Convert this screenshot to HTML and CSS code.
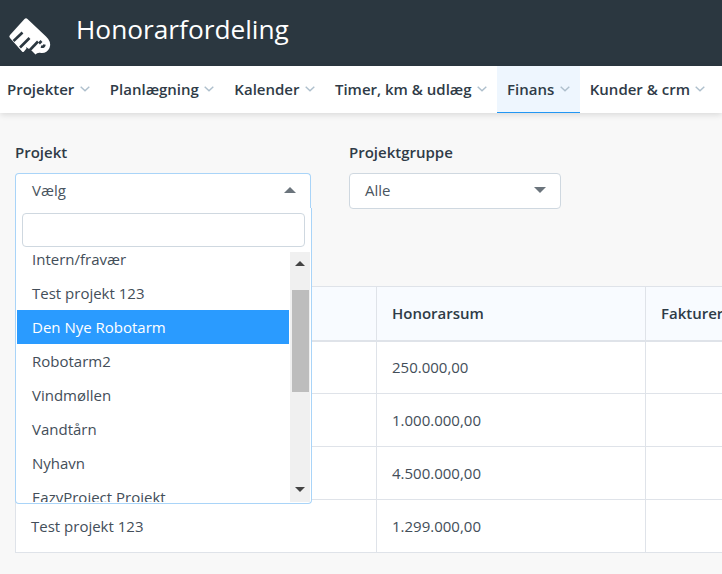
FILE: index.html
```html
<!DOCTYPE html>
<html lang="da">
<head>
<meta charset="utf-8">
<title>Honorarfordeling</title>
<link rel="stylesheet" href="styles.css">
</head>
<body>
<header class="topbar">
  <svg class="logo" viewBox="0 0 56 50" width="56" height="50" aria-label="Logo">
    <path class="logo-body" d="M24.500 11Q26 9.500 27.500 11L46 28.500Q52 34 49.500 40Q46.500 46 40 44.800Q37 44.500 35.500 46.500L32 43 26 39 26.500 40.500 24 43.500Q23 44.500 22 43.500L10 30Q8.500 28.500 10 27Z"/>
    <g class="logo-slits">
      <path d="M13.500 33 22.500 24.500"/>
      <path d="M20 39.500 29.500 30"/>
      <path d="M28 44 38 33.500"/>
      <path d="M39 35.500 41.500 33"/>
      <path d="M41 38.500Q44 39.500 44.500 36.500"/>
    </g>
  </svg>
  <h1 class="title">Honorarfordeling</h1>
</header>
<nav class="menu">
  <a class="menu-item">Projekter<svg class="chev" viewBox="0 0 10 6"><path d="M.7.7 5 4.800 9.300.7"/></svg></a>
  <a class="menu-item">Planlægning<svg class="chev" viewBox="0 0 10 6"><path d="M.7.7 5 4.800 9.300.7"/></svg></a>
  <a class="menu-item">Kalender<svg class="chev" viewBox="0 0 10 6"><path d="M.7.7 5 4.800 9.300.7"/></svg></a>
  <a class="menu-item">Timer, km &amp; udlæg<svg class="chev" viewBox="0 0 10 6"><path d="M.7.7 5 4.800 9.300.7"/></svg></a>
  <a class="menu-item active">Finans<svg class="chev" viewBox="0 0 10 6"><path d="M.7.7 5 4.800 9.300.7"/></svg></a>
  <a class="menu-item">Kunder &amp; crm<svg class="chev" viewBox="0 0 10 6"><path d="M.7.7 5 4.800 9.300.7"/></svg></a>
</nav>
<main class="content">
  <section class="filters">
    <div class="field field-project">
      <label class="field-label">Projekt</label>
      <div class="select open"><span>Vælg</span><i class="caret up"></i></div>
      <div class="dropdown">
        <input class="search" type="text" aria-label="Søg">
        <div class="listwrap">
          <ul class="options">
            <li>Intern/fravær</li>
            <li>Test projekt 123</li>
            <li class="selected">Den Nye Robotarm</li>
            <li>Robotarm2</li>
            <li>Vindmøllen</li>
            <li>Vandtårn</li>
            <li>Nyhavn</li>
            <li>EazyProject Projekt</li>
          </ul>
          <div class="scrollbar">
            <i class="caret up dark"></i>
            <div class="thumb"></div>
            <i class="caret down dark"></i>
          </div>
        </div>
      </div>
    </div>
    <div class="field field-group">
      <label class="field-label">Projektgruppe</label>
      <div class="select"><span>Alle</span><i class="caret down"></i></div>
    </div>
  </section>
  <table class="grid">
    <thead>
      <tr><th></th><th>Honorarsum</th><th>Faktureret</th></tr>
    </thead>
    <tbody>
      <tr><td></td><td>250.000,00</td><td></td></tr>
      <tr><td></td><td>1.000.000,00</td><td></td></tr>
      <tr><td></td><td>4.500.000,00</td><td></td></tr>
      <tr><td>Test projekt 123</td><td>1.299.000,00</td><td></td></tr>
    </tbody>
  </table>
</main>
</body>
</html>
```
FILE: styles.css
```css
* { box-sizing: border-box; }
html, body { margin: 0; height: 100%; overflow: hidden; }
body {
  font-family: "Open Sans", sans-serif;
  font-size: 15px;
  color: #434e59;
  background: #f8f8f8;
}
.topbar {
  height: 66px;
  background: #2b3740;
  display: flex;
  align-items: center;
}
.logo { flex: none; margin: 0 20px 0 0; }
.logo-body { fill: #fff; }
.logo-slits { fill: none; stroke: #2b3740; stroke-width: 2.600; }
.title {
  margin: -7px 0 0 0;
  font-size: 26.250px;
  font-weight: 400;
  color: #fff;
  line-height: 1;
}
.menu {
  height: 47px;
  background: #fff;
  display: flex;
  box-shadow: 0 2px 6px rgba(0, 0, 0, .12);
  position: relative;
  white-space: nowrap;
}
.menu-item {
  display: flex;
  align-items: center;
  padding: 0 10px;
  font-weight: 600;
  color: #2f3b47;
  border-bottom: 1px solid transparent;
}
.menu-item:first-child { margin-left: -3px; }
.menu-item.active { background: #eef6fe; border-bottom-color: #2196f3; }
.chev { width: 10px; height: 6px; margin-left: 5.500px; fill: none; stroke: #aebfcc; stroke-width: 1.4; }
.content { padding: 0 0 0 15px; }
.filters { display: flex; height: 173px; padding-top: 29px; }
.field { position: relative; }
.field-project { width: 296px; margin-right: 38px; }
.field-group { width: 212px; }
.field-label {
  display: block;
  font-weight: 600;
  color: #2f3b47;
  line-height: 20px;
  margin-bottom: 11px;
}
.select {
  height: 36px;
  background: #fff;
  border: 1px solid #cfd8e0;
  border-radius: 4px;
  display: flex;
  align-items: center;
  justify-content: space-between;
  padding: 0 14px 2px 15px;
  color: #4a5560;
}
.select.open {
  border-color: #a9d4f8;
  border-bottom: 0;
  border-radius: 4px 4px 0 0;
  padding: 0 14px 3px 16px;
}
.caret { display: block; width: 0; height: 0; border-left: 6px solid transparent; border-right: 6px solid transparent; }
.caret.up { border-bottom: 6px solid #6b747c; }
.caret.down { border-top: 6px solid #6b747c; }
.caret.up.dark { border-bottom-color: #444; border-left-width: 5px; border-right-width: 5px; border-bottom-width: 5px; }
.caret.down.dark { border-top-color: #444; border-left-width: 5px; border-right-width: 5px; border-top-width: 5px; }
.dropdown {
  position: absolute;
  z-index: 5;
  left: 0;
  top: 66px;
  width: 297px;
  height: 296px;
  background: #fff;
  border: 1px solid #a9d4f8;
  border-top: 0;
  border-radius: 0 0 4px 4px;
  padding: 5px 6px 1px 1px;
  display: flex;
  flex-direction: column;
}
.search {
  display: block;
  width: 283px;
  height: 34px;
  margin: 0 0 5px 5px;
  flex: none;
  background: #fff;
  border: 1px solid #cfd8e0;
  border-radius: 4px;
  outline: 0;
}
.listwrap { flex: 1; min-height: 0; display: flex; margin-right: -5px; overflow: hidden; }
.options {
  list-style: none;
  margin: -10px 0 0;
  padding: 0;
  width: 272px;
  flex: none;
  color: #434e59;
}
.options li { height: 34px; line-height: 34px; padding-left: 15px; }
.options li.selected { background: #2a9bff; color: #fff; }
.scrollbar {
  width: 20px;
  margin-left: 1px;
  background: #f0f0f0;
  display: flex;
  flex-direction: column;
  align-items: center;
  padding-top: 9px;
}
.thumb { width: 17px; height: 102px; margin-top: 24px; background: #bdbdbd; }
.scrollbar .caret.down { margin-top: 95px; }
.grid {
  border-collapse: collapse;
  table-layout: fixed;
  width: 900px;
  background: #fff;
}
.grid th, .grid td {
  border: 1px solid #dfe3e9;
  height: 53px;
  padding: 0 15px;
  text-align: left;
  color: #434e59;
}
.grid th {
  height: 54px;
  background: #f8fbff;
  font-weight: 600;
  color: #2f3b47;
  border-bottom-width: 2px;
}
.grid th:nth-child(1), .grid td:nth-child(1) { width: 361px; }
.grid th:nth-child(2), .grid td:nth-child(2) { width: 269px; }
```
